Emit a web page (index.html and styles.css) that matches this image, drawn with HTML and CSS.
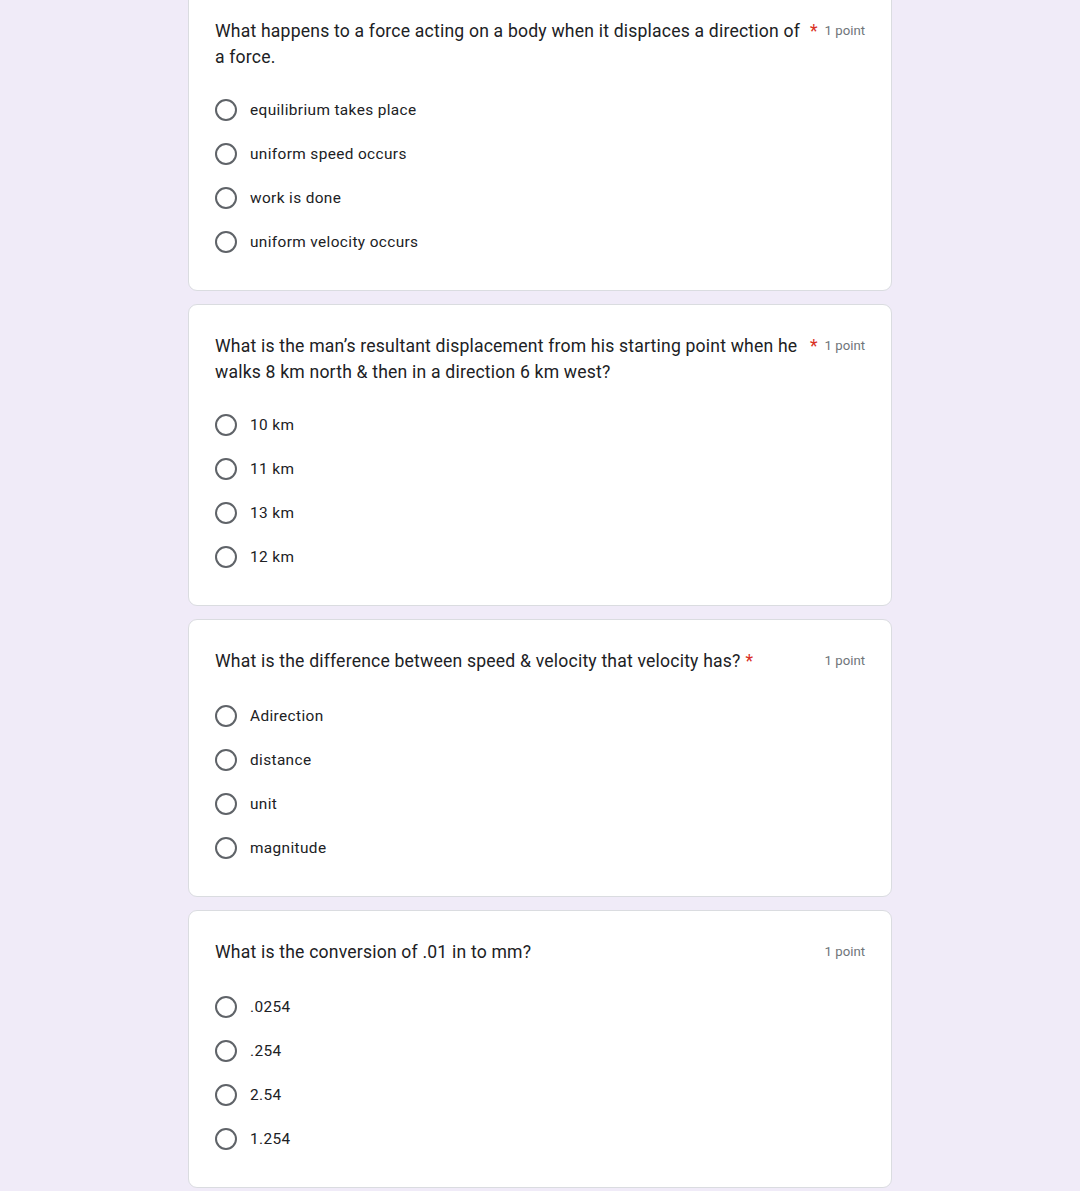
FILE: index.html
```html
<!DOCTYPE html>
<html lang="en">
<head>
<meta charset="utf-8">
<title>Quiz</title>
<link rel="stylesheet" href="styles.css">
</head>
<body>
<main class="form">
  <section class="card">
    <div class="head">
      <div class="title"><span class="qtext">What happens to a force acting on a body when it displaces a direction of a force.</span><span class="req">*</span></div>
      <span class="points">1 point</span>
    </div>
    <div class="options">
      <label class="opt"><span class="radio"></span><span class="otext">equilibrium takes place</span></label>
      <label class="opt"><span class="radio"></span><span class="otext">uniform speed occurs</span></label>
      <label class="opt"><span class="radio"></span><span class="otext">work is done</span></label>
      <label class="opt"><span class="radio"></span><span class="otext">uniform velocity occurs</span></label>
    </div>
  </section>
  <section class="card">
    <div class="head">
      <div class="title"><span class="qtext">What is the man’s resultant displacement from his starting point when he walks 8 km north &amp; then in a direction 6 km west?</span><span class="req">*</span></div>
      <span class="points">1 point</span>
    </div>
    <div class="options">
      <label class="opt"><span class="radio"></span><span class="otext">10 km</span></label>
      <label class="opt"><span class="radio"></span><span class="otext">11 km</span></label>
      <label class="opt"><span class="radio"></span><span class="otext">13 km</span></label>
      <label class="opt"><span class="radio"></span><span class="otext">12 km</span></label>
    </div>
  </section>
  <section class="card">
    <div class="head">
      <div class="title"><span class="qtext">What is the difference between speed &amp; velocity that velocity has?</span><span class="req">*</span></div>
      <span class="points">1 point</span>
    </div>
    <div class="options">
      <label class="opt"><span class="radio"></span><span class="otext">Adirection</span></label>
      <label class="opt"><span class="radio"></span><span class="otext">distance</span></label>
      <label class="opt"><span class="radio"></span><span class="otext">unit</span></label>
      <label class="opt"><span class="radio"></span><span class="otext">magnitude</span></label>
    </div>
  </section>
  <section class="card">
    <div class="head">
      <div class="title"><span class="qtext">What is the conversion of .01 in to mm?</span></div>
      <span class="points">1 point</span>
    </div>
    <div class="options">
      <label class="opt"><span class="radio"></span><span class="otext">.0254</span></label>
      <label class="opt"><span class="radio"></span><span class="otext">.254</span></label>
      <label class="opt"><span class="radio"></span><span class="otext">2.54</span></label>
      <label class="opt"><span class="radio"></span><span class="otext">1.254</span></label>
    </div>
  </section>
</main>
</body>
</html>
```
FILE: styles.css
```css
html, body {
  margin: 0;
  padding: 0;
  background: #f0ebf8;
  font-family: Roboto, "Liberation Sans", Arial, sans-serif;
  color: #202124;
  overflow: hidden;
}

.form {
  width: 704px;
  margin: -11px auto 0;
  display: flex;
  flex-direction: column;
  gap: 13px;
}

.card {
  background: #ffffff;
  border: 1px solid #dadce0;
  border-radius: 9px;
  padding: 28px 26px 26px;
}

.head {
  display: flex;
  align-items: flex-start;
  min-height: 29.4px;
}

.title {
  flex: 1;
  display: flex;
  align-items: flex-start;
  min-width: 0;
}

.qtext {
  font-size: 17.6px;
  line-height: 26.4px;
  letter-spacing: 0.19px;
  font-weight: 400;
}

.req {
  color: #d93025;
  font-size: 17.6px;
  line-height: 26.4px;
  margin-left: 5px;
  margin-right: 7px;
}

.points {
  font-size: 13.2px;
  line-height: 26.4px;
  color: #70757a;
  letter-spacing: 0;
  white-space: nowrap;
}

.options {
  margin-top: 17px;
  display: flex;
  flex-direction: column;
}

.opt {
  display: flex;
  align-items: center;
  height: 44px;
}

.radio {
  box-sizing: border-box;
  width: 22px;
  height: 22px;
  border: 2.2px solid #5f6368;
  border-radius: 50%;
  flex: none;
}

.otext {
  margin-left: 13px;
  font-size: 15.4px;
  letter-spacing: 0.37px;
  line-height: 22px;
}
```
